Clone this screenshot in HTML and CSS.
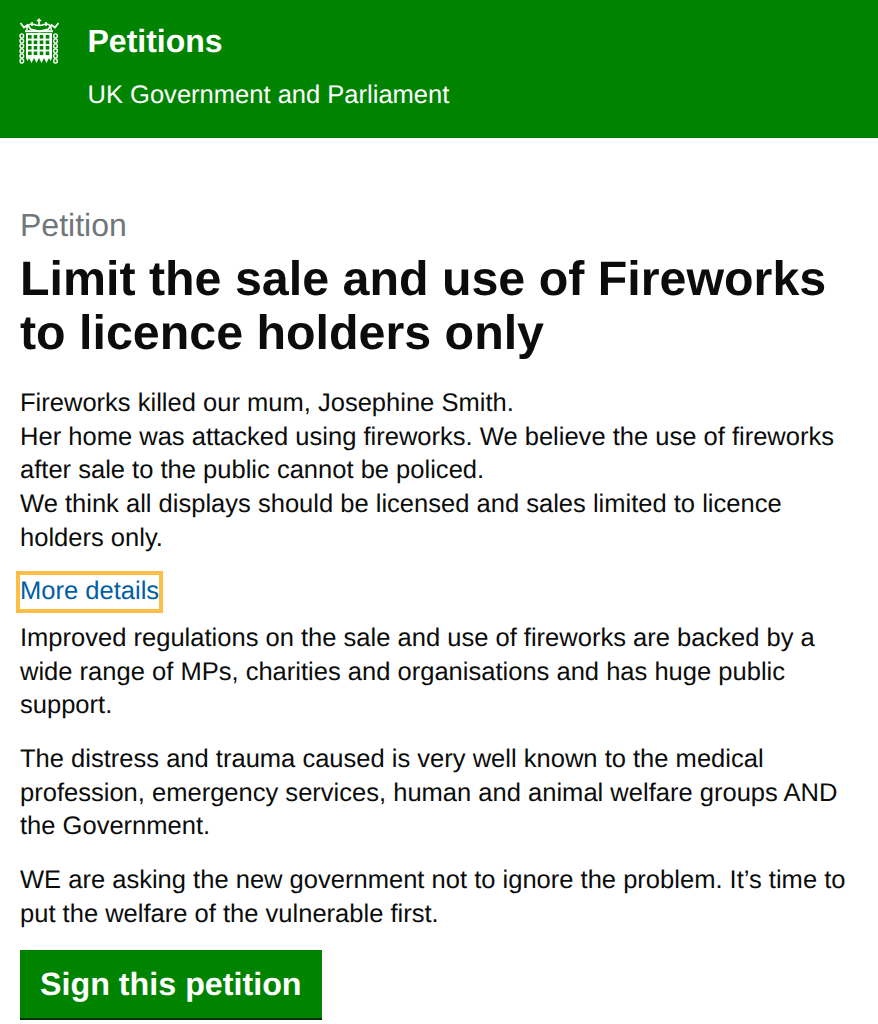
FILE: index.html
```html
<!DOCTYPE html>
<html lang="en">
<head>
<meta charset="utf-8">
<title>Limit the sale and use of Fireworks to licence holders only - Petitions</title>
<link rel="stylesheet" href="styles.css">
</head>
<body>
<header class="site-header">
  <svg class="crest" viewBox="0 0 40 46" width="40" height="46" aria-hidden="true">
    <g fill="none" stroke="#fff">
      <path stroke-width="1.800" d="M1.500 5l3.500 4.500 3.500-2.500 3.500 4.500 8.500 2 8.500-2 3.500-4.500 3.500 2.500 3.500-4.500"/>
      <path stroke-width="1.500" d="M8 12c-1-4 3-7 7-5.500 2 .8 3.500 1 5 1s3-.2 5-1c4-1.500 8 1.500 7 5.500"/>
      <path stroke-width="1.600" d="M20 0.500v7M17.800 2.500h4.400"/>
      <path stroke-width="1.600" d="M13 4v4M27 4v4"/>
      <path stroke-width="2" d="M6 13.200h28"/>
    </g>
    <g fill="none" stroke="#fff" stroke-width="1.400">
      <ellipse cx="2.800" cy="18" rx="1.800" ry="2.100"/><ellipse cx="2.800" cy="23" rx="1.800" ry="2.100"/><ellipse cx="2.800" cy="28" rx="1.800" ry="2.100"/><ellipse cx="2.800" cy="33" rx="1.800" ry="2.100"/><ellipse cx="2.800" cy="38" rx="1.800" ry="2.100"/><ellipse cx="2.800" cy="43" rx="1.800" ry="2.100"/>
      <ellipse cx="36.500" cy="18" rx="1.800" ry="2.100"/><ellipse cx="36.500" cy="23" rx="1.800" ry="2.100"/><ellipse cx="36.500" cy="28" rx="1.800" ry="2.100"/><ellipse cx="36.500" cy="33" rx="1.800" ry="2.100"/><ellipse cx="36.500" cy="38" rx="1.800" ry="2.100"/><ellipse cx="36.500" cy="43" rx="1.800" ry="2.100"/>
    </g>
    <path fill="#fff" d="M7 15h26v25l-1.500 3-1.500-3-2.500 5-2.500-5-2.500 5-2.500-5-2.500 5-2.500-5-2.500 5-2.500-5-1.500 3-1.500-3z"/>
    <g class="crest-holes">
      <rect x="9" y="17" width="3.600" height="3.600"/><rect x="14.700" y="17" width="3.600" height="3.600"/><rect x="20.700" y="17" width="3.600" height="3.600"/><rect x="26.700" y="17" width="3.600" height="3.600"/>
      <rect x="9" y="22.500" width="3.600" height="3.600"/><rect x="14.700" y="22.500" width="3.600" height="3.600"/><rect x="20.700" y="22.500" width="3.600" height="3.600"/><rect x="26.700" y="22.500" width="3.600" height="3.600"/>
      <rect x="9" y="28" width="3.600" height="3.600"/><rect x="14.700" y="28" width="3.600" height="3.600"/><rect x="20.700" y="28" width="3.600" height="3.600"/><rect x="26.700" y="28" width="3.600" height="3.600"/>
      <rect x="9" y="33.500" width="3.600" height="3.600"/><rect x="14.700" y="33.500" width="3.600" height="3.600"/><rect x="20.700" y="33.500" width="3.600" height="3.600"/><rect x="26.700" y="33.500" width="3.600" height="3.600"/>
    </g>
  </svg>
  <div class="brand">
    <div class="brand-title">Petitions</div>
    <div class="brand-sub">UK Government and Parliament</div>
  </div>
</header>
<main class="content">
  <span class="eyebrow">Petition</span>
  <h1 class="title">Limit the sale and use of Fireworks to licence holders only</h1>
  <p class="lead">Fireworks killed our mum, Josephine Smith.<br>Her home was attacked using fireworks. We believe the use of fireworks after sale to the public cannot be policed.<br>We think all displays should be licensed and sales limited to licence holders only.</p>
  <div class="details-row"><a class="details-link" href="#">More details</a></div>
  <p class="para">Improved regulations on the sale and use of fireworks are backed by a wide range of MPs, charities and organisations and has huge public support.</p>
  <p class="para">The distress and trauma caused is very well known to the medical profession, emergency services, human and animal welfare groups AND the Government.</p>
  <p class="para para-last">WE are asking the new government not to ignore the problem. It’s time to put the welfare of the vulnerable first.</p>
  <a class="button" href="#">Sign this petition</a>
</main>
</body>
</html>
```
FILE: styles.css
```css
* { box-sizing: border-box; }
html, body { margin: 0; padding: 0; }
body {
  font-family: "Liberation Sans", Arial, sans-serif;
  font-size: 25.54px;
  line-height: 33.65px;
  color: #0b0c0c;
  background: #fff;
  overflow: hidden;
  height: 1024px;
  text-rendering: geometricPrecision;
}
.site-header {
  background: #008400;
  height: 138px;
  display: flex;
  align-items: flex-start;
  padding: 18px 0 0 19px;
  gap: 28.5px;
  color: #fff;
}
.crest { flex: none; }
.crest-holes { fill: #008400; }
.brand-title { font-size: 32px; font-weight: 700; line-height: 46px; }
.brand-sub { line-height: 34px; margin-top: 14px; }
.content { padding: 68px 20px 0; }
.eyebrow { display: block; font-size: 32px; line-height: 38px; margin-bottom: 8px; color: #6f777b; }
.title { margin: 0 0 26.3px; font-size: 48.36px; line-height: 54.4px; font-weight: 700; }
.lead { margin: 0 0 20px; }
.details-row { display: flex; margin-bottom: 13px; }
.details-link { display: block; color: #005ea5; text-decoration: none; outline: 4px solid #ffbf47; }
.para { margin: 0 0 20px; }
.para-last { margin-bottom: 18.7px; }
.button {
  display: inline-block;
  background: #008400;
  color: #fff;
  font-size: 32.25px;
  font-weight: 700;
  line-height: 68px;
  padding: 0 20px;
  border-bottom: 2px solid #003300;
  text-decoration: none;
}
```
